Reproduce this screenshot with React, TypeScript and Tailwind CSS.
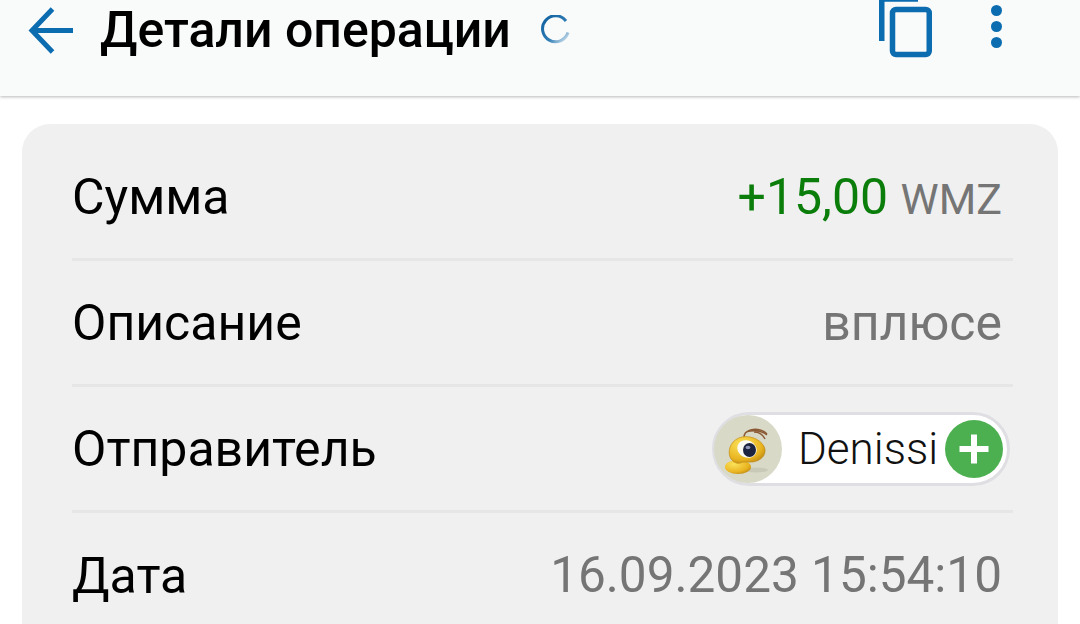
import { ReactNode } from 'react';

function BackArrow() {
  return (
    <svg width="46" height="52" viewBox="0 0 46 52" fill="none" stroke="#0b6cb0" strokeWidth="5" className="shrink-0">
      <path d="M45 25.5H5" />
      <path d="M24.5 4 4 25.5 24.5 47" />
    </svg>
  );
}

function Spinner() {
  return (
    <svg width="32" height="32" viewBox="0 0 32 32" fill="none">
      <defs>
        <linearGradient id="spin" x1="0" y1="0" x2="1" y2="1">
          <stop offset="0" stopColor="#0f5f9e" />
          <stop offset="0.6" stopColor="#2f7db5" />
          <stop offset="1" stopColor="#e4eef5" />
        </linearGradient>
      </defs>
      <path d="M27 6A13 13 0 1 0 29 17.5" stroke="url(#spin)" strokeWidth="3" />
    </svg>
  );
}

function CopyIcon() {
  return (
    <svg width="54" height="58" viewBox="0 0 54 58" fill="none" stroke="#0b6cb0" className="shrink-0">
      <path d="M2.75 41V-1H39" strokeWidth="5.5" />
      <rect x="13.5" y="9.5" width="36.75" height="45" rx="3.5" strokeWidth="5.5" />
    </svg>
  );
}

function AntAvatar() {
  return (
    <div className="flex h-[68px] w-[68px] shrink-0 items-center justify-center rounded-full bg-[#d9d9c8]">
      <svg width="68" height="68" viewBox="0 0 68 68" fill="none">
        <defs>
          <radialGradient id="ant" cx="0.35" cy="0.3" r="0.8">
            <stop offset="0" stopColor="#fbe25a" />
            <stop offset="0.7" stopColor="#e9b420" />
            <stop offset="1" stopColor="#b98512" />
          </radialGradient>
        </defs>
        <path d="M30 23c0-4 2-7 6-7 6-1 12 0 17 4" stroke="#8b5a35" strokeWidth="1.5" />
        <path d="M34 16c6-3 14-2 19 3M40 17c5 0 9 3 11 7" stroke="#8b5a35" strokeWidth="1.5" />
        <ellipse cx="42" cy="55" rx="12" ry="2.5" fill="#c9c9b8" />
        <ellipse cx="24" cy="52" rx="13" ry="7" fill="url(#ant)" />
        <path d="M16 42c-3-8 2-18 12-20 10-2 21 4 23 12 1 7-5 12-12 13-6 .5-9-1-13 1-3 1-8-1-10-6Z" fill="url(#ant)" stroke="#b98512" strokeWidth=".6" />
        <ellipse cx="33" cy="34" rx="10" ry="8.5" transform="rotate(25 33 34)" fill="#fbfbf4" />
        <ellipse cx="35.5" cy="35" rx="6.5" ry="7" fill="#1d2440" />
        <ellipse cx="34" cy="32.5" rx="2.4" ry="1.8" fill="#8d96b5" />
      </svg>
    </div>
  );
}

function SenderChip() {
  return (
    <div className="mr-[3px] flex h-[74px] w-[298px] items-center rounded-full border-[3px] border-[#dfdfe3] bg-white">
      <div className="-ml-[1px]">
        <AntAvatar />
      </div>
      <span className="ml-[16px] text-[44px] font-light leading-none text-[#111]">Denissi</span>
      <div className="ml-[7px] flex h-[58px] w-[58px] items-center justify-center rounded-full bg-[#4caf50]">
        <svg width="30" height="30" viewBox="0 0 30 30" fill="white">
          <rect x="12" y="0.5" width="6" height="29" />
          <rect x="0.5" y="12" width="29" height="6" />
        </svg>
      </div>
    </div>
  );
}

function Row({ label, children, last }: { label: string; children: ReactNode; last?: boolean }) {
  return (
    <div className={`flex h-[126px] shrink-0 items-center justify-between border-[#e6e6e6] ${last ? '' : 'border-b-[3px]'}`}>
      <span className="text-[50px] leading-none text-black">{label}</span>
      {children}
    </div>
  );
}

export default function App() {
  return (
    <div className="h-[624px] w-[1080px] overflow-hidden bg-white font-['Roboto',sans-serif]">
      <header className="relative flex h-[96px] items-start overflow-hidden bg-[#f9fafa] shadow-[0_1px_3px_rgba(0,0,0,0.28)]">
        <div className="ml-[28px] mt-[5px]">
          <BackArrow />
        </div>
        <h1 className="ml-[26px] mt-[5px] text-[50px] font-medium leading-[50px] text-black">Детали операции</h1>
        <div className="ml-[28px] mt-[15px]">
          <Spinner />
        </div>
        <div className="ml-auto flex items-start">
          <CopyIcon />
          <div className="ml-[58px] mr-[78px] mt-[5px] flex flex-col gap-[5px]">
            <span className="h-[11px] w-[11px] rounded-full bg-[#0b6cb0]" />
            <span className="h-[11px] w-[11px] rounded-full bg-[#0b6cb0]" />
            <span className="h-[11px] w-[11px] rounded-full bg-[#0b6cb0]" />
          </div>
        </div>
      </header>

      <main className="mx-[22px] mt-[28px] h-[560px] rounded-[28px] bg-[#f0f0f0] pl-[50px] pr-[45px]">
        <div className="flex flex-col pt-[11px]">
          <Row label="Сумма">
            <span className="pr-[11px] text-[50px] leading-none text-[#0a7d0a]">
              +15,00 <span className="text-[43px] text-[#757575]">WMZ</span>
            </span>
          </Row>
          <Row label="Описание">
            <span className="pr-[11px] text-[50px] leading-none text-[#757575]">вплюсе</span>
          </Row>
          <Row label="Отправитель">
            <SenderChip />
          </Row>
          <Row label="Дата" last>
            <span className="pr-[11px] text-[49.5px] leading-none text-[#757575]">16.09.2023 15:54:10</span>
          </Row>
        </div>
      </main>
    </div>
  );
}
